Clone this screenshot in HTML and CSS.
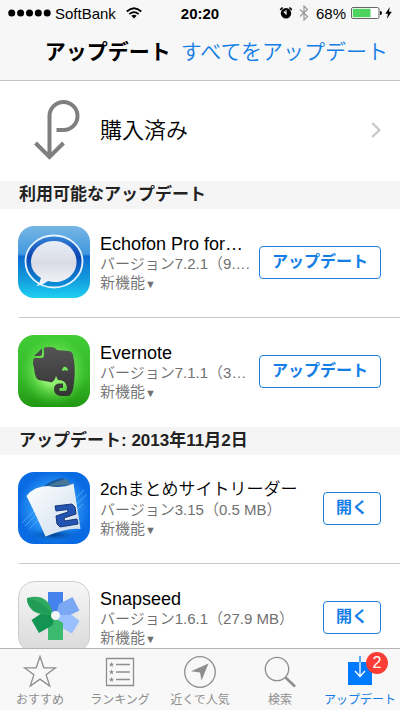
FILE: index.html
```html
<!DOCTYPE html>
<html lang="ja">
<head>
<meta charset="utf-8">
<meta name="viewport" content="width=device-width, initial-scale=1">
<title>アップデート</title>
<link rel="stylesheet" href="styles.css">
</head>
<body>
<div class="app">
  <header class="header">
    <div class="status">
      <div class="status-left">
        <svg width="43" height="8" viewBox="0 0 43 8" aria-hidden="true"><circle cx="3.700" cy="4" r="3.500"/><circle cx="12.600" cy="4" r="3.500"/><circle cx="21.500" cy="4" r="3.500"/><circle cx="30.300" cy="4" r="3.500"/><circle cx="39.200" cy="4" r="3.500"/></svg>
        <span class="carrier">SoftBank</span>
        <svg width="16" height="12" viewBox="0 0 16 12" aria-hidden="true"><g fill="none" stroke="#000" stroke-width="1.800"><path d="M.8 4.500Q8-2 15.200 4.500"/><path d="M3.300 7.200Q8 3 12.700 7.200"/></g><path d="M5.300 8.800Q8 6.600 10.700 8.800L8 11.500Z"/></svg>
      </div>
      <time class="clock">20:20</time>
      <div class="status-right">
        <svg width="14" height="14" viewBox="0 0 14 14" aria-hidden="true"><circle cx="7" cy="7.300" r="5.200"/><path d="M1.200 3.800L3.600 1.500M12.800 3.800L10.400 1.500" stroke="#000" stroke-width="1.600"/><path d="M4.800 5.500L7 7.800V4" fill="none" stroke="#fff" stroke-width="1.100"/></svg>
        <svg class="bluetooth" width="10" height="16" viewBox="0 0 10 16" aria-hidden="true"><path d="M1 4.500L8.500 11.500L5 15V1L8.500 4.500L1 11.500" fill="none" stroke="#999" stroke-width="1.200"/></svg>
        <span>68%</span>
        <svg class="battery" width="32" height="12" viewBox="0 0 32 12" aria-hidden="true"><rect x=".5" y=".5" width="27.500" height="11" rx="1.500" fill="#fff" stroke="#666"/><rect x="1.800" y="1.800" width="17.700" height="8.400" fill="#4cd45f"/><path d="M29 4Q31 4 31 6T29 8Z"/></svg>
        <svg width="7" height="12" viewBox="0 0 7 12" aria-hidden="true"><path d="M4.800 0L.3 6.800H3L1.800 12L6.800 4.800H4Z"/></svg>
      </div>
    </div>
    <nav class="navbar">
      <h1 class="nav-title">アップデート</h1>
      <a class="nav-action" href="#all">すべてをアップデート</a>
    </nav>
  </header>

  <main class="content">
    <a class="purchased" href="#purchased">
      <svg class="purchased-icon" width="46" height="62" viewBox="0 0 46 62" fill="none" stroke="#7f7f7f" stroke-width="4" aria-hidden="true"><path d="M22.500 31H29.500A14 14 0 1 0 15.500 17V58M1.500 44L15.500 58L29.500 44"/></svg>
      <span class="purchased-label">購入済み</span>
      <svg width="10" height="16" viewBox="0 0 10 16" fill="none" stroke="#c7c7cc" stroke-width="2.400" aria-hidden="true"><path d="M1.200 1L8.400 8L1.200 15"/></svg>
    </a>

    <h2 class="section">利用可能なアップデート</h2>
    <ul class="apps">
      <li class="app-row">
        <svg class="app-icon" viewBox="0 0 72 72" aria-hidden="true">
          <defs>
            <linearGradient id="eb" x2="0" y2="1"><stop offset="0" stop-color="#75b6e4"/><stop offset=".39" stop-color="#4398df"/><stop offset=".42" stop-color="#0c6bd0"/><stop offset=".75" stop-color="#139ddd"/><stop offset="1" stop-color="#1ed0f2"/></linearGradient>
            <linearGradient id="er" x2="0" y2="1"><stop offset="0" stop-color="#3686d8"/><stop offset=".4" stop-color="#0b45b3"/><stop offset="1" stop-color="#0d93d8"/></linearGradient>
            <linearGradient id="ew" x2="0" y2="1"><stop offset="0" stop-color="#e9edf5"/><stop offset=".5" stop-color="#d9dce5"/><stop offset="1" stop-color="#f6f7fb"/></linearGradient>
          </defs>
          <rect width="72" height="72" rx="16" fill="url(#eb)"/>
          <ellipse cx="36" cy="35.500" rx="28.500" ry="26" fill="url(#er)" stroke="#e5f3ff" stroke-width="1.800"/>
          <path d="M36 15C48.500 15 58.500 24 58.500 36S48.500 56 37 56Q33 56 30 55Q25 59 18.500 60Q22 57 23 52Q13 46 13 36C13 24 23.500 15 36 15Z" fill="url(#ew)"/>
        </svg>
        <div class="app-text">
          <h3 class="app-name">Echofon Pro for…</h3>
          <p class="app-meta">バージョン7.2.1（9.…</p>
          <p class="app-meta">新機能<span class="caret">▼</span></p>
        </div>
        <button class="action wide" type="button">アップデート</button>
      </li>
      <li class="app-row">
        <svg class="app-icon" viewBox="0 0 72 72" aria-hidden="true">
          <defs>
            <linearGradient id="vb" x2="0" y2="1"><stop offset="0" stop-color="#40cc35"/><stop offset=".6" stop-color="#36b82a"/><stop offset="1" stop-color="#219812"/></linearGradient>
            <radialGradient id="vg"><stop offset=".4" stop-color="#a5ff80" stop-opacity=".8"/><stop offset="1" stop-color="#52de3d" stop-opacity="0"/></radialGradient>
            <linearGradient id="ve" x2="0" y2="1"><stop offset="0" stop-color="#555"/><stop offset="1" stop-color="#333"/></linearGradient>
          </defs>
          <rect width="72" height="72" rx="16" fill="url(#vb)"/>
          <ellipse cx="36" cy="36" rx="34" ry="35" fill="url(#vg)"/>
          <path d="M26 13Q27 12 32 12Q37 12 39 15L50 16Q54 16 55 20Q58 32 56 48Q55 60 50 61H43Q36 60 36 54Q36 48 43 48.500H45V53H41.500V56H48Q50 54 48 49Q46 45 40 45Q39 43 38 41Q36 48 32 47L21 45Q17 44 16 33Q14 27 16 23H23Q26 23 26 20Z" fill="url(#ve)"/>
          <path d="M16 21L24 13.500V19Q24 21 22 21Z" fill="#484b48"/>
          <path d="M44 36Q44.500 31 48 32Q50 33 50 36Q47 34.500 44 36Z" fill="#75e65b"/>
        </svg>
        <div class="app-text">
          <h3 class="app-name">Evernote</h3>
          <p class="app-meta">バージョン7.1.1（3…</p>
          <p class="app-meta">新機能<span class="caret">▼</span></p>
        </div>
        <button class="action wide" type="button">アップデート</button>
      </li>
    </ul>

    <h2 class="section">アップデート: 2013年11月2日</h2>
    <ul class="apps">
      <li class="app-row">
        <svg class="app-icon" viewBox="0 0 72 72" aria-hidden="true">
          <defs>
            <radialGradient id="cb"><stop offset="0" stop-color="#48adf8"/><stop offset=".65" stop-color="#268ff2"/><stop offset="1" stop-color="#096be4"/></radialGradient>
            <linearGradient id="cp" x2="1" y2="1"><stop offset="0" stop-color="#fff"/><stop offset="1" stop-color="#cbdbed"/></linearGradient>
            <radialGradient id="cs"><stop offset="0" stop-color="#00408f"/><stop offset="1" stop-color="#0769dc" stop-opacity="0"/></radialGradient>
          </defs>
          <rect width="72" height="72" rx="16" fill="url(#cb)"/>
          <ellipse cx="36" cy="63" rx="31" ry="7" fill="url(#cs)"/>
          <path d="M4 51L16 39M7 54L20 41M11 57L23 45M55 29L66 18M56 35L69 22M56 41L65 32" stroke="#6fbdf8" stroke-width=".6"/>
          <path d="M26 14Q35 7 45 6L52 13L30 17Z" fill="#175b9c"/>
          <path d="M30 14Q41 8 49 7L53 13Z" fill="#487698"/>
          <path d="M8.500 24Q16 14 30 14Q44 17 55.500 11.500L62.500 57Q50 55 27.500 64.500Q18 43 8.500 24Z" fill="url(#cp)"/>
          <path d="M37 34L54 32L57 35L58 42L46 46L46.500 49L59 47L60 52L42 55L39 52L38 44L50 40L49.500 37.500L38 39Z" fill="#2454b2" stroke="#153778"/>
        </svg>
        <div class="app-text">
          <h3 class="app-name kana">2chまとめサイトリーダー</h3>
          <p class="app-meta">バージョン3.15（0.5 MB）</p>
          <p class="app-meta">新機能<span class="caret">▼</span></p>
        </div>
        <button class="action" type="button">開く</button>
      </li>
      <li class="app-row">
        <svg class="app-icon" viewBox="0 0 72 72" aria-hidden="true">
          <defs><linearGradient id="sb" x2="0" y2="1"><stop offset="0" stop-color="#f7f7f7"/><stop offset="1" stop-color="#d9d9d9"/></linearGradient></defs>
          <rect x=".5" y=".5" width="71" height="71" rx="16" fill="url(#sb)" stroke="#ccc"/>
          <path d="M30 11H45V31L37.500 35L30 30Z" fill="#4481ed"/>
          <path d="M38 33L41 23L54.500 16L61.500 29.500L46 37Z" fill="#7ba8f5"/>
          <path d="M38 34L54 34L61.500 40L54 52.500L39 44Z" fill="#9ac0ff"/>
          <path d="M30 59V42L37 37L45 42V59Z" fill="#3cbb70"/>
          <path d="M36 32L35 44L21 52L13.500 39L24 32Z" fill="#149452"/>
          <path d="M9 17Q30 11 35 33Q23 35 15 30Q9 25 9 17Z" fill="#2eab61"/>
          <path d="M9 17Q24 20 35 33Q18 33 13 27Q9 23 9 17Z" fill="#219c57"/>
          <circle cx="37.500" cy="34.500" r="4.500" fill="#f3f6f5"/>
        </svg>
        <div class="app-text">
          <h3 class="app-name">Snapseed</h3>
          <p class="app-meta">バージョン1.6.1（27.9 MB）</p>
          <p class="app-meta">新機能<span class="caret">▼</span></p>
        </div>
        <button class="action" type="button">開く</button>
      </li>
    </ul>
  </main>

  <nav class="tabs">
    <a class="tab" href="#featured">
      <svg class="tab-icon" viewBox="0 0 34 34" aria-hidden="true"><path d="M17 1.500L20.800 12.800H32.500L23.100 19.700L26.700 31L17 24.100L7.300 31L10.900 19.700L1.500 12.800H13.200Z"/></svg>
      <span>おすすめ</span>
    </a>
    <a class="tab" href="#ranking">
      <svg class="tab-icon" viewBox="0 0 34 34" aria-hidden="true"><path d="M3.500 3.500H30.500V30.500H3.500ZM13 9.500H27M13 17H27M13 24.500H27"/><g class="solid"><path id="s" d="M8.500 6.800L9.200 8.700H11.200L9.600 9.900L10.200 11.900L8.500 10.700L6.800 11.900L7.400 9.900L5.800 8.700H7.800Z"/><use href="#s" y="7.500"/><use href="#s" y="15"/></g></svg>
      <span>ランキング</span>
    </a>
    <a class="tab" href="#near">
      <svg class="tab-icon" viewBox="0 0 34 34" aria-hidden="true"><circle cx="17" cy="17" r="15.300"/><path class="solid" d="M25.500 8.500L18.500 25.500L17 17.500L8 16.200Z"/></svg>
      <span>近くで人気</span>
    </a>
    <a class="tab" href="#search">
      <svg class="tab-icon" viewBox="0 0 34 34" aria-hidden="true"><circle cx="14" cy="14" r="11.700"/><path d="M22.500 22.500L32 31.500" stroke-width="2.500"/></svg>
      <span>検索</span>
    </a>
    <a class="tab active" href="#updates">
      <span class="tab-badge-wrap">
        <svg class="tab-icon" viewBox="0 0 34 34" aria-hidden="true"><path d="M5 7H29V30H5Z" fill="#007aff" stroke="none"/><path d="M17 1V7" stroke="#007aff"/><path d="M17 7V21M12 16L17 21.500L22 16" stroke="#fff"/></svg>
        <span class="badge">2</span>
      </span>
      <span>アップデート</span>
    </a>
  </nav>
</div>
</body>
</html>
```
FILE: styles.css
```css
* {
  box-sizing: border-box;
}

body,
h1,
h2,
h3,
p,
ul {
  margin: 0;
  padding: 0;
}

body {
  font-family: "Liberation Sans", "Noto Sans CJK JP", sans-serif;
  color: #000;
  background: #fff;
}

a {
  color: inherit;
  text-decoration: none;
}

svg {
  display: block;
  flex: none;
}

.app {
  display: flex;
  flex-direction: column;
  height: 100vh;
}

.header {
  flex: none;
  background: #f7f7f7;
  border-bottom: 1px solid #c4c4c6;
}

.status {
  display: grid;
  grid-template-columns: 1fr auto 1fr;
  align-items: center;
  height: 26px;
  padding: 0 8px;
  font-size: 15px;
}

.status-left,
.status-right {
  display: flex;
  align-items: center;
  gap: 5px;
}

.status-left {
  gap: 4px;
}

.carrier {
  padding-right: 6px;
}

.status-right {
  justify-content: flex-end;
}

.bluetooth {
  margin: 0 2px 0 1px;
}

.battery {
  margin-right: -3px;
}

.clock {
  font-weight: bold;
}

.navbar {
  display: flex;
  justify-content: flex-end;
  gap: 10px;
  height: 54px;
  padding: 0 12px;
  font-size: 21px;
  line-height: 52px;
  white-space: nowrap;
}

.nav-title {
  font-size: 21px;
  font-weight: bold;
}

.nav-action {
  color: #157ee6;
  font-weight: 350;
}

.content {
  flex: 1;
  min-height: 0;
  overflow: hidden;
}

.purchased {
  display: flex;
  align-items: center;
  height: 100px;
  padding: 0 19px 2px 34px;
}

.purchased-icon {
  margin-right: 20px;
}

.purchased-label {
  flex: 1;
  padding-bottom: 4px;
  font-size: 22px;
  font-weight: 350;
}

.section {
  height: 28px;
  padding-left: 19px;
  background: #f5f5f5;
  color: #222;
  font-size: 17px;
  font-weight: bold;
  line-height: 28px;
}

.apps {
  list-style: none;
}

.app-row {
  position: relative;
  display: flex;
  align-items: center;
  height: 109px;
  padding: 0 19px 3px 18px;
}

.app-row:not(:last-child)::after {
  content: "";
  position: absolute;
  left: 19px;
  right: 0;
  bottom: 0;
  height: 1px;
  background: #c8c8cc;
}

.app-icon {
  width: 72px;
  height: 72px;
}

.app-text {
  flex: 1;
  min-width: 0;
  padding: 3px 0 0 10px;
  white-space: nowrap;
}

.app-name {
  font-size: 18px;
  font-weight: normal;
  line-height: 20px;
}

.kana {
  font-size: 17px;
  font-weight: 350;
}

.app-meta {
  color: #707070;
  font-size: 15px;
  font-weight: 350;
  line-height: 19px;
}

.caret {
  font-size: 11px;
}

.action {
  flex: none;
  width: 58px;
  height: 33px;
  padding: 0;
  background: #fff;
  border: 1px solid #1a7fe0;
  border-radius: 4px;
  color: #157ee6;
  font: bold 16px/30px "Liberation Sans", "Noto Sans CJK JP", sans-serif;
}

.wide {
  width: 122px;
}

.tabs {
  flex: none;
  display: grid;
  grid-template-columns: repeat(5, 1fr);
  height: 62px;
  padding-top: 6px;
  background: #f8f8f8;
  border-top: 1px solid #b4b4b4;
}

.tab {
  display: flex;
  flex-direction: column;
  align-items: center;
  color: #8e8e8e;
  font-size: 12px;
  line-height: 22px;
  white-space: nowrap;
}

.tab-icon {
  width: 34px;
  height: 34px;
  fill: none;
  stroke: #8e8e8e;
  stroke-width: 1.3;
}

.solid {
  fill: #8e8e8e;
  stroke: none;
}

.active {
  color: #157ee6;
}

.tab-badge-wrap {
  position: relative;
}

.badge {
  position: absolute;
  top: -3px;
  right: -11px;
  width: 22px;
  height: 22px;
  border-radius: 50%;
  background: #fb3d35;
  color: #fff;
  font-size: 16px;
  line-height: 22px;
  text-align: center;
}
```
